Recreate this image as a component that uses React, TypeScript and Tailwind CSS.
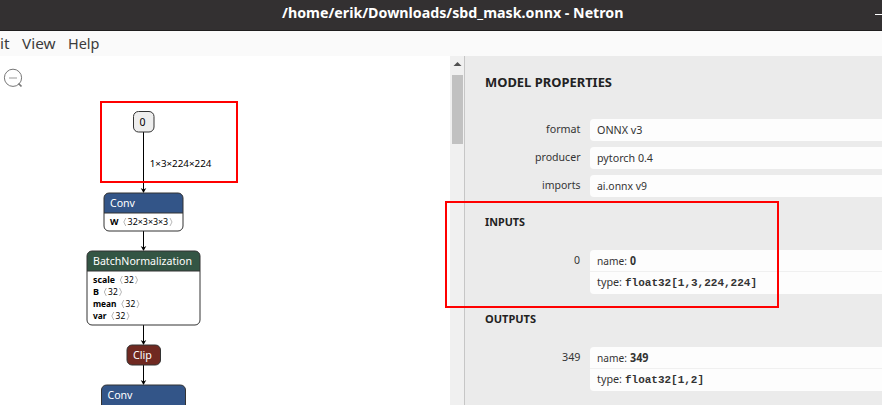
import React from "react";

type LabelProps = { x: number; y: number; w: number; size?: number; fill?: string; bold?: boolean; children: string };

function Label({ x, y, w, size = 11, fill = "#000", bold = false, children }: LabelProps) {
  return (
    <text x={x} y={y} fontSize={size} fill={fill} fontWeight={bold ? 700 : 400} textLength={w} lengthAdjust="spacingAndGlyphs">
      {children}
    </text>
  );
}

function Edge({ from, to }: { from: number; to: number }) {
  return (
    <g>
      <path d={`M143.5 ${from}V${to - 3}`} stroke="#000" strokeWidth="1" />
      <path d={`M140.7 ${to - 5}L143.5 ${to}L146.3 ${to - 5}L143.5 ${to - 3.5}Z`} fill="#000" />
    </g>
  );
}

function Bracketed({ x, y, w, children }: { x: number; y: number; w: number; children: string }) {
  return (
    <g>
      <path d={`M${x + 2.5} ${y - 7}l-2 4 2 4M${x + w - 2.5} ${y - 7}l2 4 -2 4`} fill="none" stroke="#999" strokeWidth="0.7" />
      <Label x={x + 4.3} y={y} w={w - 8.6} size={9.2}>{children}</Label>
    </g>
  );
}

const params = [
  { name: "scale", y: 283, w: 22 },
  { name: "B", y: 295, w: 6 },
  { name: "mean", y: 307, w: 23.5 },
  { name: "var", y: 319, w: 13.5 },
];

function Graph() {
  return (
    <svg className="block h-full w-full" viewBox="0 56 450 349" fontFamily="'Noto Sans', sans-serif">
      <g fill="none" stroke="#777" strokeWidth="1">
        <circle cx="13" cy="77.8" r="8.6" />
        <path d="M9 78H17" stroke="#999" />
        <path d="M18.5 83.5L21.5 86.5" strokeWidth="1.7" />
      </g>
      <Edge from={132} to={193} />
      <Edge from={231} to={251} />
      <Edge from={325} to={345} />
      <Edge from={365} to={385} />
      <rect x="133.5" y="111.5" width="20.5" height="20.5" rx="5" fill="#eee" stroke="#333" />
      <Label x={139.5} y={126} w={6}>0</Label>
      <Label x={149.7} y={167} w={61.7} size={9.4}>1×3×224×224</Label>

      <rect x="104" y="193" width="79" height="38" rx="5" fill="#fff" />
      <path d="M104 213V198a5 5 0 0 1 5-5H178a5 5 0 0 1 5 5V213Z" fill="#335588" />
      <path d="M104 213H183" stroke="#333" />
      <rect x="104" y="193" width="79" height="38" rx="5" fill="none" stroke="#333" />
      <Label x={110} y={207} w={25} fill="#fff">Conv</Label>
      <Label x={110} y={225} w={8.5} size={9} bold>W</Label>
      <Bracketed x={123.3} y={225} w={49.2}>32×3×3×3</Bracketed>

      <rect x="87" y="251" width="113" height="74" rx="5" fill="#fff" />
      <path d="M87 271V256a5 5 0 0 1 5-5H195a5 5 0 0 1 5 5V271Z" fill="#335544" />
      <path d="M87 271H200" stroke="#333" />
      <rect x="87" y="251" width="113" height="74" rx="5" fill="none" stroke="#333" />
      <Label x={93} y={265} w={99} fill="#fff">BatchNormalization</Label>
      {params.map((p) => (
        <g key={p.name}>
          <Label x={93} y={p.y} w={p.w} size={9} bold>{p.name}</Label>
          <Bracketed x={93 + p.w + 4.8} y={p.y} w={18.2}>32</Bracketed>
        </g>
      ))}

      <rect x="127" y="345" width="33.5" height="20" rx="5" fill="#702921" stroke="#333" />
      <Label x={133} y={359} w={19} fill="#fff">Clip</Label>
      <rect x="101.5" y="385" width="84" height="38" rx="5" fill="#335588" stroke="#333" />
      <Label x={107.5} y={399} w={25} fill="#fff">Conv</Label>
    </svg>
  );
}

function Fit({ w, bold = false, size = 11.5, mono = false, children }: { w: number; bold?: boolean; size?: number; mono?: boolean; children: string }) {
  return (
    <svg className="block h-5 shrink-0 overflow-visible" width={w} height="20" fill="currentColor">
      <text x="0" y="14" fontSize={size} fontWeight={bold ? 700 : 400} fontFamily={mono ? "'Liberation Mono', monospace" : "'Noto Sans', sans-serif"} textLength={w} lengthAdjust="spacingAndGlyphs">
        {children}
      </text>
    </svg>
  );
}

function Property({ label, w, value, vw }: { label: string; w: number; value: string; vw: number }) {
  return (
    <div className="flex h-[22px]">
      <div className="flex w-[115px] justify-end"><Fit w={w}>{label}</Fit></div>
      <div className="ml-[10px] flex-1 rounded-l-sm bg-[#fdfdfd] pl-[7px] pt-px"><Fit w={vw}>{value}</Fit></div>
    </div>
  );
}

function Tensor({ label, w, type, tw }: { label: string; w: number; type: string; tw: number }) {
  return (
    <div className="flex h-11">
      <div className="flex w-[115px] justify-end"><Fit w={w}>{label}</Fit></div>
      <div className="ml-[10px] flex-1 rounded-l-sm bg-[#fdfdfd]">
        <div className="flex h-[22px] gap-[3px] border-b border-[#f0f0f0] pl-[7px] pt-px">
          <Fit w={30}>name:</Fit><Fit w={w} bold>{label}</Fit>
        </div>
        <div className="flex h-[22px] gap-[3px] pl-[7px]">
          <Fit w={25}>type:</Fit><Fit w={tw} bold mono size={11}>{type}</Fit>
        </div>
      </div>
    </div>
  );
}

export default function App() {
  return (
    <div className="relative flex h-[405px] w-[882px] flex-col overflow-hidden bg-white font-['Noto_Sans',sans-serif] text-[#333]">
      <header className="flex h-[31px] shrink-0 border-b border-[#1f1d1e] bg-[#333031] pl-[282px] pt-1 text-white">
        <Fit w={341.5} bold size={14}>/home/erik/Downloads/sbd_mask.onnx - Netron</Fit>
        <div className="ml-auto mt-[10px] h-px w-[7px] bg-white" />
      </header>
      <nav className="flex h-[25px] shrink-0 bg-[#fafafa] pt-1 text-[#3c3c3c]">
        <div className="w-[22px]"><Fit w={9.5} size={14.5}>it</Fit></div>
        <div className="w-[46px]"><Fit w={33.5} size={14.5}>View</Fit></div>
        <Fit w={31.5} size={14.5}>Help</Fit>
      </nav>
      <div className="flex min-h-0 flex-1">
        <main className="w-[450px] shrink-0"><Graph /></main>
        <div className="flex w-[14px] shrink-0 flex-col bg-[#f0f0f0]">
          <svg className="block h-[19px] w-[14px]" viewBox="0 0 14 19"><path d="M3.5 10L7.5 6L11.5 10Z" fill="#505050" /></svg>
          <div className="ml-[2px] h-[69px] w-[11px] bg-[#c1c1c1]" />
        </div>
        <aside className="flex flex-1 flex-col border-l border-[#c6c6c6] bg-[#ebebeb]">
          <div className="h-[63px] shrink-0 pl-5 pt-[17px] text-[#222]"><Fit w={127} bold size={12.5}>MODEL PROPERTIES</Fit></div>
          <section className="flex shrink-0 flex-col gap-[6px]">
            <Property label="format" w={34.5} value="ONNX v3" vw={45.5} />
            <Property label="producer" w={45.5} value="pytorch 0.4" vw={56} />
            <Property label="imports" w={38.5} value="ai.onnx v9" vw={50} />
          </section>
          <div className="h-[53px] shrink-0 pl-5 pt-[15px] text-[#222]"><Fit w={40} bold size={11.3}>INPUTS</Fit></div>
          <div className="shrink-0"><Tensor label="0" w={6} type="float32[1,3,224,224]" tw={132} /></div>
          <div className="h-[53px] shrink-0 pl-5 pt-[15px] text-[#222]"><Fit w={51} bold size={11.3}>OUTPUTS</Fit></div>
          <div className="shrink-0"><Tensor label="349" w={18.5} type="float32[1,2]" tw={79} /></div>
        </aside>
      </div>
      <div className="absolute left-[100px] top-[101px] h-[82px] w-[138px] border-2 border-[#f00]" />
      <div className="absolute left-[445px] top-[201px] h-[107px] w-[334px] border-2 border-[#f00]" />
    </div>
  );
}
